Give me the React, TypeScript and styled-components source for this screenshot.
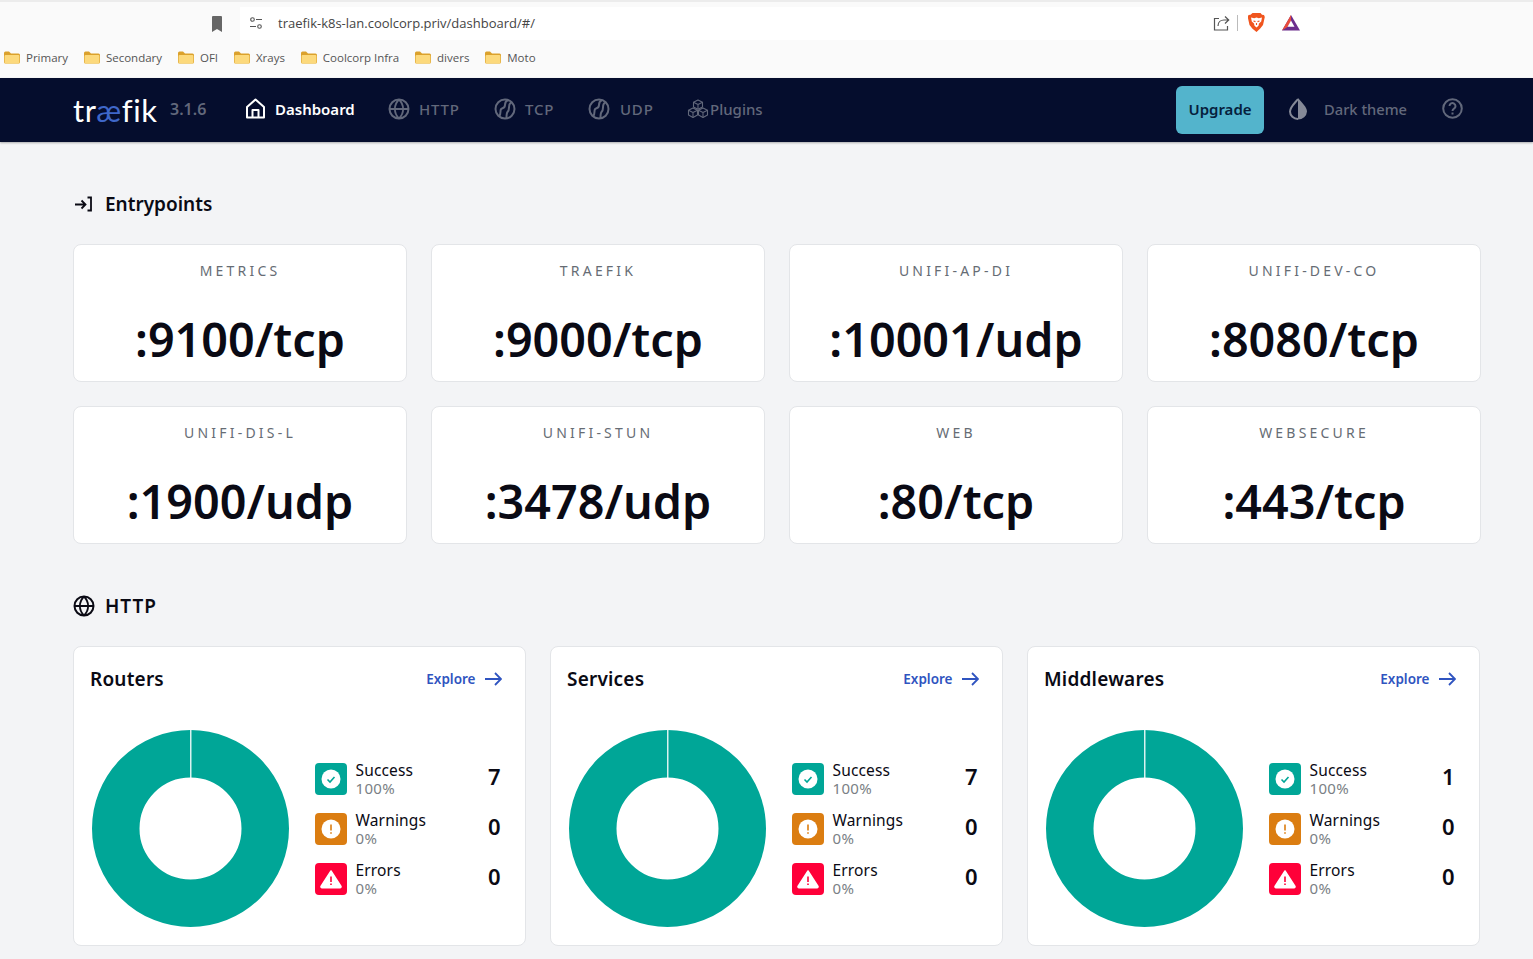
import React from "react";
import styled, { createGlobalStyle } from "styled-components";

const FONT = `"Noto Sans", "Open Sans", "Liberation Sans", sans-serif`;
const MUTED = "#62687b";

const GlobalStyle = createGlobalStyle`
  html, body {
    margin: 0;
    padding: 0;
    height: 100%;
    overflow: hidden;
    background: #f3f4f6;
    font-family: ${FONT};
  }
`;

/* ---------------------------------------- */
/* Browser chrome */
/* ---------------------------------------- */
const BrowserBar = styled.div`
  height: 78px;
  box-sizing: border-box;
  background: #fafafa;
  border-top: 2px solid #ececec;
  display: flex;
  flex-direction: column;
`;

const AddressRow = styled.div`
  display: flex;
  align-items: center;
  height: 33px;
  margin-top: 5px;
  padding-left: 210px;
`;

const BookmarkGlyph = styled.svg`
  width: 14px;
  height: 16px;
  margin-right: 16px;
`;

const AddressBox = styled.div`
  width: 1080px;
  height: 33px;
  background: #fff;
  display: flex;
  align-items: center;
  padding: 0 0 2px 9px;
  box-sizing: border-box;
`;

const UrlText = styled.span`
  font-family: "Open Sans", sans-serif;
  font-size: 13px;
  color: #444;
  margin-left: 15px;
  flex: 1;
`;

const AddressIcons = styled.div`
  display: flex;
  align-items: center;
  margin-right: 20px;
`;

const Separator = styled.span`
  width: 1px;
  height: 16px;
  background: #bbb;
  margin: 0 10px 0 7px;
`;

const BookmarkRow = styled.div`
  display: flex;
  align-items: center;
  margin-top: 6px;
  padding-left: 4px;
  height: 22px;
`;

const BookmarkItem = styled.div`
  display: flex;
  align-items: center;
  gap: 6px;
  margin-right: 15.9px;
  font-family: "Open Sans", sans-serif;
  font-size: 11.5px;
  color: #555;
`;

/* ---------------------------------------- */
/* Nav */
/* ---------------------------------------- */
const Nav = styled.nav`
  height: 64px;
  background: #050d2d;
  box-shadow: 0 1px 2px rgba(0, 0, 0, 0.3);
  display: flex;
  align-items: center;
  padding-left: 73px;
  padding-right: 70px;
  position: relative;
`;

const Logo = styled.div`
  font-family: Lato, sans-serif;
  font-weight: 400;
  font-size: 31px;
  letter-spacing: 0.6px;
  color: #fff;
  width: 85px;
  line-height: 64px;
  white-space: nowrap;
  span {
    color: #3f67c9;
  }
`;

const Version = styled.span`
  font-size: 16px;
  font-weight: 600;
  color: ${MUTED};
  margin-left: 12px;
  width: 75px;
  padding-bottom: 3px;
`;

const NavItem = styled.a<{ $active?: boolean; $gap?: number; $width: number; $caps?: boolean }>`
  display: flex;
  align-items: center;
  gap: ${(p) => p.$gap ?? 9}px;
  width: ${(p) => p.$width}px;
  font-size: 15px;
  line-height: 22px;
  padding-bottom: 3px;
  font-weight: ${(p) => (p.$active ? 600 : 500)};
  letter-spacing: ${(p) => (p.$caps ? "0.8px" : "0")};
  color: ${(p) => (p.$active ? "#fff" : MUTED)};
  svg {
    flex: none;
  }
`;

const Spacer = styled.div`
  flex: 1;
`;

const UpgradeButton = styled.button`
  width: 88px;
  height: 48px;
  border: 0;
  border-radius: 6px;
  background: #53b4cc;
  color: #06203c;
  font-family: ${FONT};
  font-size: 15px;
  font-weight: 600;
  padding: 0 0 2px;
  margin-right: 24px;
`;

const ThemeIcons = styled.div`
  display: flex;
  align-items: center;
  padding-bottom: 3px;
`;

const ThemeLabel = styled.span`
  font-size: 14.7px;
  font-weight: 500;
  color: ${MUTED};
  margin-left: 16px;
  margin-right: 35px;
`;

/* ---------------------------------------- */
/* Content */
/* ---------------------------------------- */
const Main = styled.main`
  padding: 47px 53px 0 73px;
`;

const SectionTitle = styled.h2`
  display: flex;
  align-items: center;
  gap: 12px;
  margin: 0;
  height: 30px;
  font-size: 19px;
  font-weight: 600;
  color: #0a0a14;
`;

const EntryGrid = styled.div`
  display: grid;
  grid-template-columns: repeat(4, 334px);
  gap: 24px;
  margin-top: 25px;
`;

const EntryCard = styled.div`
  height: 138px;
  box-sizing: border-box;
  background: #fff;
  border: 1px solid #e3e5e8;
  border-radius: 8px;
  display: flex;
  flex-direction: column;
  align-items: center;
`;

const EntryName = styled.div`
  margin-top: 17px;
  height: 18px;
  line-height: 18px;
  font-size: 14px;
  letter-spacing: 3.2px;
  color: #666c74;
`;

const EntryPort = styled.div`
  margin-top: 29px;
  font-size: 46.7px;
  line-height: 60px;
  font-weight: 600;
  color: #0a0a14;
  white-space: nowrap;
`;

const HttpTitle = styled(SectionTitle)`
  margin-top: 47px;
  gap: 10px;
  letter-spacing: 1px;
`;

const StatGrid = styled.div`
  display: grid;
  grid-template-columns: repeat(3, 453px);
  gap: 24px;
  margin-top: 25px;
`;

const StatCard = styled.div`
  height: 300px;
  box-sizing: border-box;
  background: #fff;
  border: 1px solid #e3e5e8;
  border-radius: 8px;
  padding: 18px 23.5px 0 16px;
`;

const StatHeader = styled.div`
  display: flex;
  align-items: center;
  justify-content: space-between;
  height: 28px;
`;

const StatTitle = styled.h3`
  margin: 0;
  font-size: 19px;
  font-weight: 600;
  letter-spacing: 0.2px;
  color: #0a0a14;
`;

const ExploreLink = styled.a`
  display: flex;
  align-items: center;
  gap: 9px;
  font-size: 13.5px;
  font-weight: 600;
  color: #2f54c0;
`;

const StatBody = styled.div`
  display: flex;
  align-items: center;
  margin-top: 37px;
  padding-left: 2px;
`;

const Donut = styled.svg`
  width: 197px;
  height: 197px;
  flex: none;
`;

const Legend = styled.div`
  margin-left: 26px;
  flex: 1;
  display: flex;
  flex-direction: column;
  gap: 18px;
`;

const LegendRow = styled.div`
  display: flex;
  align-items: center;
  height: 32px;
`;

const LegendIcon = styled.div<{ $color: string }>`
  width: 32px;
  height: 32px;
  flex: none;
  border-radius: 4px;
  background: ${(p) => p.$color};
  display: flex;
  align-items: center;
  justify-content: center;
`;

const LegendText = styled.div`
  margin-left: 8.5px;
  flex: 1;
`;

const LegendLabel = styled.div`
  font-size: 15.5px;
  letter-spacing: 0.15px;
  line-height: 18px;
  color: #0a0a14;
`;

const LegendPercent = styled.div`
  font-size: 15px;
  letter-spacing: 0.3px;
  line-height: 18px;
  color: #7a7f85;
`;

const LegendCount = styled.div`
  font-size: 22px;
  font-weight: 600;
  color: #0a0a14;
  margin-right: 1px;
  padding-bottom: 6px;
`;

/* ---------------------------------------- */
/* Drawings */
/* ---------------------------------------- */
const Folder = () => (
  <svg width="16" height="13" viewBox="0 0 16 13">
    <path d="M0 2a1.500 1.500 0 0 1 1.500-1.500h3.500l2 2h7.500a1.500 1.500 0 0 1 1.500 1.500v7a1.500 1.500 0 0 1-1.500 1.500h-13a1.500 1.500 0 0 1-1.500-1.500z" fill="#dba12c" />
    <path d="M.6 5a1 1 0 0 1 1-1h12.800a1 1 0 0 1 1 1v6.500a1 1 0 0 1-1 1H1.600a1 1 0 0 1-1-1z" fill="#fcd97c" />
  </svg>
);

const WebIcon = ({ color }: { color: string }) => (
  <svg width="22" height="22" viewBox="0 0 22 22" fill="none" stroke={color} strokeWidth="2">
    <circle cx="11" cy="11" r="9.500" />
    <path d="M1.500 11h19M11 1.500c-5.500 5.500-5.500 13.500 0 19M11 1.500c5.500 5.500 5.500 13.500 0 19" strokeWidth="1.800" />
  </svg>
);

const TcpIcon = () => (
  <svg width="22" height="22" viewBox="0 0 22 22" fill="none" stroke={MUTED} strokeWidth="2">
    <circle cx="11" cy="11" r="9.500" />
    <path d="M14 2c-2.500 1-3 3-3 5s-1 3-3 3.500c-1.500.4-1.500 1.500-1.500 3 0 2.500-.5 4-1.500 5" />
    <path d="M17.500 4.500c-2 .5-2.500 2.500-2.500 5s-.5 3.500-1.500 4.500c-1 1.200-1 3.500-1 6" />
  </svg>
);

const PluginsIcon = () => (
  <svg width="22" height="20" viewBox="0 0 22 20" fill="none" stroke={MUTED} strokeWidth="1.100" strokeLinejoin="round">
    <path d="M11 1l4.500 2.300v4.700L11 10.300 6.500 8V3.300z" />
    <path d="M6.500 3.300L11 5.600l4.500-2.300M11 5.600v4.700" />
    <path d="M6 9l4.500 2.300V16L6 18.500 1.500 16v-4.700z" />
    <path d="M1.500 11.300L6 13.600l4.500-2.300M6 13.600v4.900" />
    <path d="M16 9l4.500 2.300V16L16 18.500 11.500 16v-4.700z" />
    <path d="M11.500 11.300l4.500 2.300 4.500-2.300M16 13.600v4.900" />
  </svg>
);

const Tick = () => (
  <svg width="20" height="20" viewBox="0 0 20 20">
    <circle cx="10" cy="10" r="9.500" fill="#fff" />
    <path d="M6.500 10.500l2.500 2.500 4.500-5" fill="none" stroke="#00a697" strokeWidth="1.600" />
  </svg>
);

const Bang = () => (
  <svg width="20" height="20" viewBox="0 0 20 20">
    <circle cx="10" cy="10" r="9.500" fill="#fff" />
    <path d="M10 5.500v6M10 13.200v1.500" stroke="#db7d11" strokeWidth="1.600" />
  </svg>
);

const Triangle = () => (
  <svg width="22" height="20" viewBox="0 0 22 20">
    <path d="M11 2L21 17.500a1 1 0 0 1-1 1.300H2a1 1 0 0 1-1-1.300z" fill="#fff" stroke="#fff" strokeLinejoin="round" strokeWidth="1.500" />
    <path d="M11 7.500v5.500M11 14.500v1.600" stroke="#ff0039" strokeWidth="1.600" />
  </svg>
);

const entrypoints = [
  ["METRICS", ":9100/tcp"],
  ["TRAEFIK", ":9000/tcp"],
  ["UNIFI-AP-DI", ":10001/udp"],
  ["UNIFI-DEV-CO", ":8080/tcp"],
  ["UNIFI-DIS-L", ":1900/udp"],
  ["UNIFI-STUN", ":3478/udp"],
  ["WEB", ":80/tcp"],
  ["WEBSECURE", ":443/tcp"],
];

const stats = [
  { title: "Routers", success: 7 },
  { title: "Services", success: 7 },
  { title: "Middlewares", success: 1 },
];

const bookmarks = ["Primary", "Secondary", "OFI", "Xrays", "Coolcorp Infra", "divers", "Moto"];

export default function App() {
  return (
    <>
      <GlobalStyle />
      <BrowserBar>
        <AddressRow>
          <BookmarkGlyph viewBox="0 0 14 16">
            <path d="M2 1a1 1 0 0 1 1-1h8a1 1 0 0 1 1 1v15l-5-3-5 3z" fill="#666" />
          </BookmarkGlyph>
          <AddressBox>
            <svg width="14" height="14" viewBox="0 0 14 14" fill="none" stroke="#555" strokeWidth="1.100">
              <circle cx="3.500" cy="3.500" r="1.800" />
              <path d="M7 3.500h6M1 10.500h6" />
              <circle cx="10.500" cy="10.500" r="1.800" />
            </svg>
            <UrlText>traefik-k8s-lan.coolcorp.priv/dashboard/#/</UrlText>
            <AddressIcons>
              <svg width="17" height="16" viewBox="0 0 17 16" fill="none" stroke="#555" strokeWidth="1.200">
                <path d="M6 3.500H1.500v11.500h13v-4" />
                <path d="M5 11c0-4 3-6 6-6h4M12 1.500L15.700 5 12 8.500" />
              </svg>
              <Separator />
              <svg width="17" height="19" viewBox="0 0 17 19">
                <path d="M4.500 0h8l1.500 1.700 2 .3.800 2-1.800 8-3 3.800L8.500 19l-4-3.200-3-3.800-1.800-8 .8-2 2-.3z" fill="#f0551e" />
                <path d="M3 4.500l3.200.8 2.300-.8 2.300.8 3.200-.8-.8 4-2.200 2-.5 2.200-2 1.800-2-1.800-.5-2.200-2.200-2z" fill="#fff" />
                <path d="M5.500 8l2 .6M11.500 8l-2 .6M8.500 10v2" stroke="#f0551e" strokeWidth="1.100" />
              </svg>
              <svg width="18" height="16" viewBox="0 0 18 16" style={{ marginLeft: 17 }}>
                <path d="M9 0l9 15.500H0z" fill="#6b2d8c" />
                <path d="M9 0L2.500 11.200 0 15.500 5.500 12 9 6z" fill="#ea4c3a" />
                <path d="M9 5.500l3.500 6.300H5.500z" fill="#fff" />
              </svg>
            </AddressIcons>
          </AddressBox>
        </AddressRow>
        <BookmarkRow>
          {bookmarks.map((b) => (
            <BookmarkItem key={b}>
              <Folder />
              {b}
            </BookmarkItem>
          ))}
        </BookmarkRow>
      </BrowserBar>

      <Nav>
        <Logo>
          tr<span>æ</span>fik
        </Logo>
        <Version>3.1.6</Version>
        <NavItem $active $width={143}>
          <svg width="21" height="21" viewBox="0 0 21 21" fill="none" stroke="#fff" strokeWidth="2" strokeLinejoin="round">
            <path d="M2 9l8.500-7.500L19 9v10.500H2z" />
            <path d="M7.500 19.500V12h6v7.500" />
          </svg>
          Dashboard
        </NavItem>
        <NavItem $caps $width={106}>
          <WebIcon color={MUTED} />
          HTTP
        </NavItem>
        <NavItem $caps $width={94}>
          <TcpIcon />
          TCP
        </NavItem>
        <NavItem $caps $gap={10} $width={99}>
          <TcpIcon />
          UDP
        </NavItem>
        <NavItem $gap={1} $width={90}>
          <PluginsIcon />
          Plugins
        </NavItem>
        <Spacer />
        <UpgradeButton>Upgrade</UpgradeButton>
        <ThemeIcons>
          <svg width="20" height="23" viewBox="0 0 20 23">
            <path d="M10 2C7 6 2 10 2 14.500A8 7.500 0 0 0 10 22" fill="none" stroke="#858997" strokeWidth="2" />
            <path d="M10 1c4 5 9 9 9 13.500a9 8.500 0 0 1-9 8z" fill="#858997" />
          </svg>
          <ThemeLabel>Dark theme</ThemeLabel>
          <svg width="21" height="21" viewBox="0 0 21 21" fill="none" stroke={MUTED} strokeWidth="2">
            <circle cx="10.500" cy="10.500" r="9.300" />
            <path d="M7.500 8a3 3 0 1 1 4.500 2.700c-1 .6-1.500 1-1.500 2.300M10.500 14.500v2" />
          </svg>
        </ThemeIcons>
      </Nav>

      <Main>
        <SectionTitle>
          <svg width="20" height="16" viewBox="0 0 20 16" fill="none" stroke="#0a0a14" strokeWidth="1.800">
            <path d="M2 8.500h10M8.500 4.500l4 4-4 4M14.500 1.500h3.500v13h-3.500" />
          </svg>
          Entrypoints
        </SectionTitle>
        <EntryGrid>
          {entrypoints.map(([name, port]) => (
            <EntryCard key={name}>
              <EntryName>{name}</EntryName>
              <EntryPort>{port}</EntryPort>
            </EntryCard>
          ))}
        </EntryGrid>

        <HttpTitle>
          <WebIcon color="#0a0a14" />
          HTTP
        </HttpTitle>
        <StatGrid>
          {stats.map((s) => (
            <StatCard key={s.title}>
              <StatHeader>
                <StatTitle>{s.title}</StatTitle>
                <ExploreLink>
                  Explore
                  <svg width="17" height="14" viewBox="0 0 17 14" fill="none" stroke="#2f54c0" strokeWidth="1.800">
                    <path d="M0 7h15.500M10 1l6 6-6 6" />
                  </svg>
                </ExploreLink>
              </StatHeader>
              <StatBody>
                <Donut viewBox="0 0 197 197">
                  <circle cx="98.500" cy="98.500" r="74.750" fill="none" stroke="#00a697" strokeWidth="47.500" />
                  <rect x="98" y="0" width="1.500" height="48" fill="#fff" opacity="0.85" />
                </Donut>
                <Legend>
                  <LegendRow>
                    <LegendIcon $color="#00a697">
                      <Tick />
                    </LegendIcon>
                    <LegendText>
                      <LegendLabel>Success</LegendLabel>
                      <LegendPercent>100%</LegendPercent>
                    </LegendText>
                    <LegendCount>{s.success}</LegendCount>
                  </LegendRow>
                  <LegendRow>
                    <LegendIcon $color="#db7d11">
                      <Bang />
                    </LegendIcon>
                    <LegendText>
                      <LegendLabel>Warnings</LegendLabel>
                      <LegendPercent>0%</LegendPercent>
                    </LegendText>
                    <LegendCount>0</LegendCount>
                  </LegendRow>
                  <LegendRow>
                    <LegendIcon $color="#ff0039">
                      <Triangle />
                    </LegendIcon>
                    <LegendText>
                      <LegendLabel>Errors</LegendLabel>
                      <LegendPercent>0%</LegendPercent>
                    </LegendText>
                    <LegendCount>0</LegendCount>
                  </LegendRow>
                </Legend>
              </StatBody>
            </StatCard>
          ))}
        </StatGrid>
      </Main>
    </>
  );
}
